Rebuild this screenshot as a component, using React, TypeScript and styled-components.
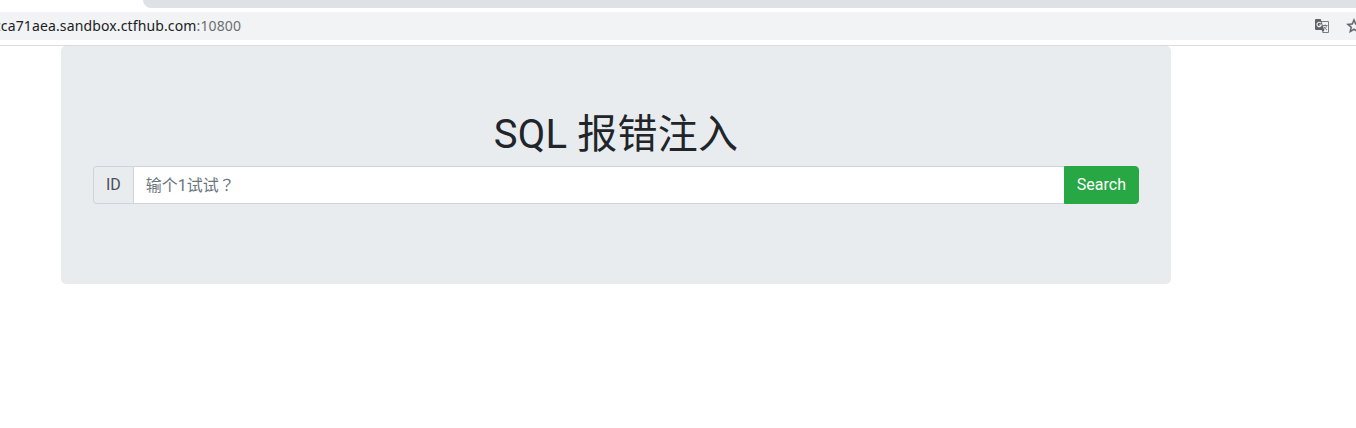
import React from "react";
import styled, { createGlobalStyle } from "styled-components";

const GlobalStyle = createGlobalStyle`
  *, *::before, *::after { box-sizing: border-box; }
  body {
    margin: 0;
    background: #fff;
    color: #212529;
    font: 400 16px/1.5 Roboto, "Noto Sans CJK SC", sans-serif;
    overflow: hidden;
  }
`;

const TabStrip = styled.div`
  height: 8px;
  margin-left: 143px;
  background: #dee1e6;
  border-bottom-left-radius: 8px;
`;

const Toolbar = styled.div`
  height: 38px;
  padding: 4px 0 5px;
  border-bottom: 1px solid #dadce0;
`;

const AddressBar = styled.div`
  height: 28px;
  display: flex;
  align-items: center;
  justify-content: space-between;
  background: #f1f3f4;
  overflow: hidden;
`;

const Url = styled.div`
  margin-left: -6px;
  font: 14px/28px "Noto Sans", sans-serif;
  letter-spacing: 0.13px;
  color: #202124;
  white-space: nowrap;
`;

const Port = styled.span`
  color: #6b6f73;
`;

const Actions = styled.div`
  display: flex;
  align-items: center;
  gap: 15px;
  margin-right: -7px;
  svg { display: block; }
`;

const Jumbotron = styled.main`
  width: 1110px;
  margin-left: 61px;
  padding: 64px 32px;
  background: #e9ecef;
  border-radius: 5px;
`;

const Title = styled.h1`
  margin: 0 0 8px;
  font-size: 40px;
  font-weight: 400;
  line-height: 50px;
  height: 48px;
  letter-spacing: 0.2px;
  text-align: center;
`;

const InputGroup = styled.form`
  display: flex;
  height: 38px;
  margin: 0 0 16px;
`;

const Prefix = styled.label`
  padding: 6px 12px;
  border: 1px solid #ced4da;
  border-right: 0;
  border-radius: 4px 0 0 4px;
  background: #e9ecef;
  color: #495057;
`;

const Field = styled.input`
  flex: 1;
  min-width: 0;
  padding: 7px 12px 5px;
  border: 1px solid #ced4da;
  border-right: 0;
  border-radius: 0;
  background: #fff;
  color: #495057;
  font: 400 16px/1.5 Roboto, "Noto Sans CJK TC", sans-serif;
  outline: 0;
  &::placeholder { color: #6c757d; opacity: 1; }
`;

const SearchButton = styled.button`
  padding: 6px 12px;
  border: 1px solid #28a745;
  border-radius: 0 4px 4px 0;
  background: #28a745;
  color: #fff;
  font: inherit;
`;

const TranslateIcon = () => (
  <svg width="16" height="16" viewBox="0 0 16 16" fill="none">
    <path d="M6.5 3.5h8v11h-6" stroke="#797c80" />
    <path d="M2 1h4.7l3.5 11H2a1 1 0 0 1-1-1V2a1 1 0 0 1 1-1z" fill="#5f6368" />
    <path d="M7.5 12 9 14.5l1.3-2.5z" fill="#5f6368" />
    <path d="M6.9 5.1A2.2 2.2 0 1 0 7.3 7H5.2" stroke="#f1f3f4" strokeWidth="1.1" />
    <path d="M9 7.5h4.5M11.2 6.5v1M12.7 7.5c-.4 1.7-1.2 2.7-2.3 3.6M10 8.6c.7 1.5 1.7 2.5 3 3.5" stroke="#777a7e" />
  </svg>
);

const StarIcon = () => (
  <svg width="18" height="18" viewBox="0 0 24 24" fill="#5f6368" stroke="#5f6368" strokeWidth="0.5">
    <path d="M22 9.24l-7.19-.62L12 2 9.19 8.63 2 9.24l5.46 4.73L5.82 21 12 17.27 18.18 21l-1.63-7.03L22 9.24zM12 15.4l-3.76 2.27 1-4.28-3.32-2.88 4.38-.38L12 6.1l1.71 4.04 4.38.38-3.32 2.88 1 4.28L12 15.4z" />
  </svg>
);

export default function App() {
  return (
    <>
      <GlobalStyle />
      <TabStrip />
      <Toolbar>
        <AddressBar>
          <Url>cca71aea.sandbox.ctfhub.com<Port>:10800</Port></Url>
          <Actions>
            <TranslateIcon />
            <StarIcon />
          </Actions>
        </AddressBar>
      </Toolbar>
      <Jumbotron>
        <Title>SQL 报错注入</Title>
        <InputGroup>
          <Prefix htmlFor="record-id">ID</Prefix>
          <Field id="record-id" lang="zh-Hant" placeholder="输个1试试？" />
          <SearchButton type="button">Search</SearchButton>
        </InputGroup>
      </Jumbotron>
    </>
  );
}
